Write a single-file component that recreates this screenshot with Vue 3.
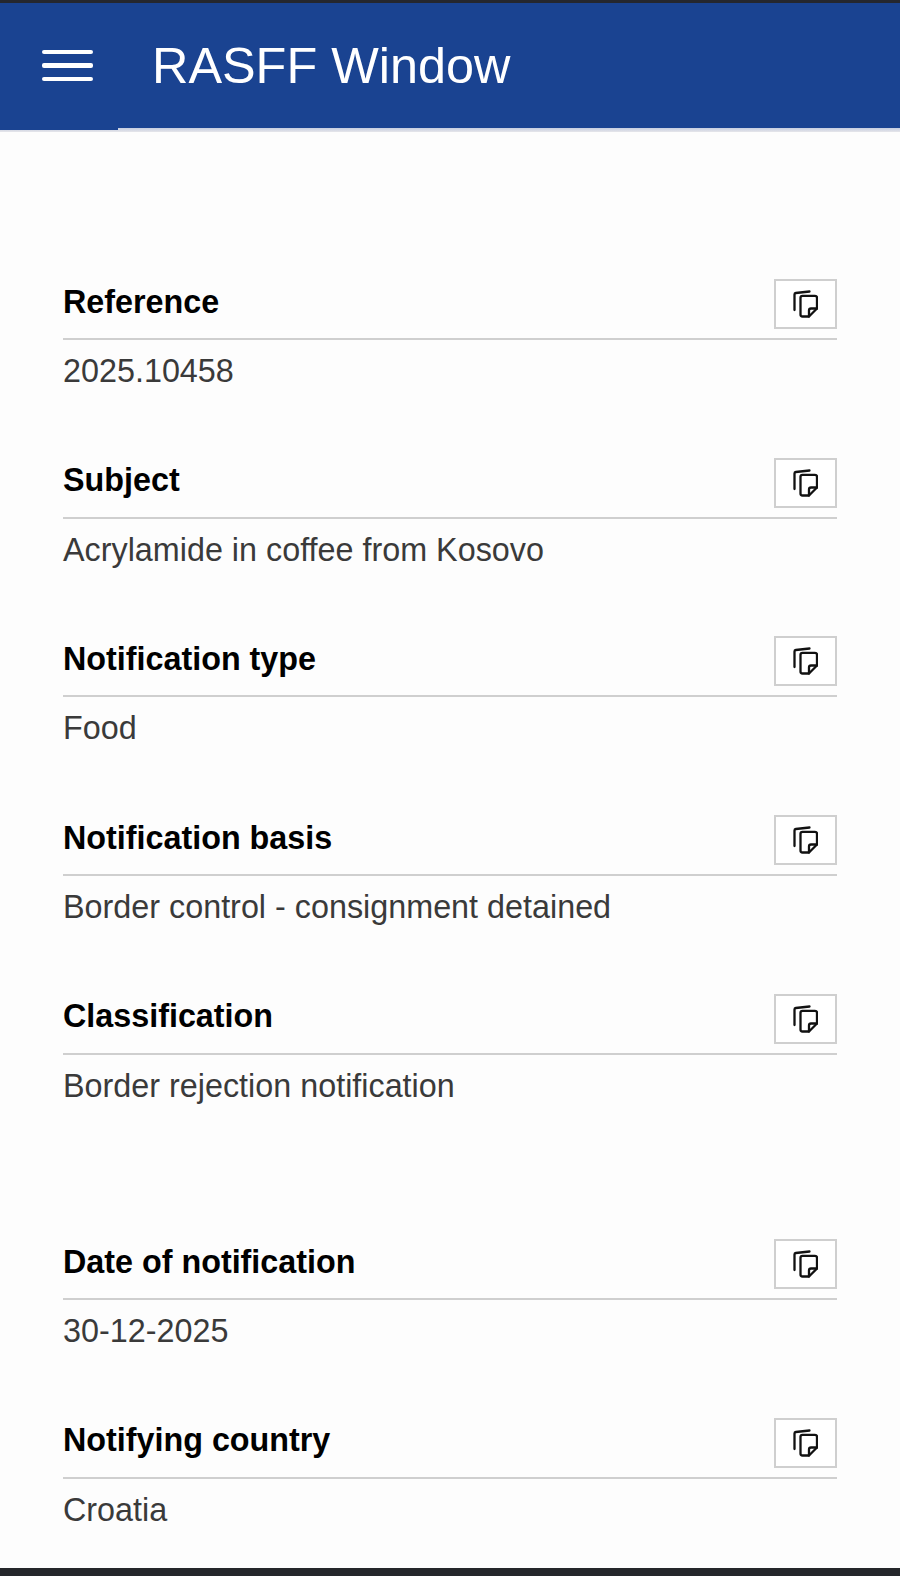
<script setup>
const groups = [
  [
    { label: 'Reference', value: '2025.10458' },
    { label: 'Subject', value: 'Acrylamide in coffee from Kosovo' },
    { label: 'Notification type', value: 'Food' },
    { label: 'Notification basis', value: 'Border control - consignment detained' },
    { label: 'Classification', value: 'Border rejection notification' },
  ],
  [
    { label: 'Date of notification', value: '30-12-2025' },
    { label: 'Notifying country', value: 'Croatia' },
  ],
];
</script>

<template>
  <div class="screen">
    <div class="status-edge"></div>
    <header class="app-bar">
      <button class="menu-btn" aria-label="Menu">
        <span></span><span></span><span></span>
      </button>
      <h1>RASFF Window</h1>
    </header>
    <div class="bar-shadow">
      <div class="tab-mark"></div>
    </div>

    <main class="details">
      <section v-for="(group, g) in groups" :key="g" class="group">
        <div v-for="item in group" :key="item.label" class="field">
          <div class="field-head">
            <strong>{{ item.label }}</strong>
            <button class="copy-btn" aria-label="Copy">
              <svg width="25" height="28" viewBox="0 0 25 28" fill="none" stroke="#111" stroke-width="2.3" stroke-linecap="round" stroke-linejoin="round">
                <path d="M1.5 20V4.5Q1.5 3.2 2.8 3L16.5 1.5" />
                <path d="M16 26.5H9.5Q7.5 26.5 7.5 24.5V7.8Q7.5 5.8 9.5 5.8H22Q24 5.8 24 7.8V18.5Z" />
                <path d="M16 26.5V20.5Q16 18.5 18 18.5H24" />
              </svg>
            </button>
          </div>
          <p>{{ item.value }}</p>
        </div>
      </section>
    </main>

    <div class="bottom-edge"></div>
  </div>
</template>

<style>
html,
body {
  margin: 0;
  background: #fdfdfd;
}
</style>

<style scoped>
.screen {
  width: 900px;
  height: 1576px;
  display: flex;
  flex-direction: column;
  overflow: hidden;
  background: #fdfdfd;
  font-family: "Liberation Sans", Arial, sans-serif;
}

.status-edge {
  height: 3px;
  background: #25272e;
}

.app-bar {
  height: 125px;
  display: flex;
  align-items: center;
  background: #1a4391;
  color: #fff;
}

.menu-btn {
  width: 51px;
  margin: 0 0 0 42px;
  padding: 0;
  display: flex;
  flex-direction: column;
  gap: 9px;
  background: none;
  border: none;
}

.menu-btn span {
  height: 4.5px;
  border-radius: 2px;
  background: #fff;
}

h1 {
  margin: 2px 0 0 59px;
  font-size: 50.4px;
  font-weight: 400;
  line-height: 1;
}

.bar-shadow {
  height: 4px;
  background: linear-gradient(#c5cde0, #e6e6ea);
}

.tab-mark {
  width: 118px;
  height: 2px;
  background: #1a4391;
}

.details {
  flex: 1;
  padding: 147px 63px 0;
  display: flex;
  flex-direction: column;
  gap: 66.6px;
}

.field {
  height: 178.7px;
}

.group:last-child .field:last-child {
  height: 112px;
}

.group:first-child .field:last-child {
  height: 178.7px;
}

.field-head {
  height: 59px;
  display: flex;
  justify-content: space-between;
  align-items: flex-start;
  border-bottom: 2px solid #cfcfcf;
  box-sizing: content-box;
}

strong {
  margin-top: 4.5px;
  font-size: 32.3px;
  line-height: 36px;
  font-weight: 700;
  color: #000;
}

.copy-btn {
  width: 63px;
  height: 50px;
  padding: 0;
  display: flex;
  align-items: center;
  justify-content: center;
  background: #fff;
  border: 2px solid #cfcfcf;
  box-sizing: border-box;
}

p {
  margin: 12px 0 0;
  font-size: 32.35px;
  line-height: 38px;
  color: #3a3a3a;
}

.bottom-edge {
  height: 8px;
  background: #25272b;
}
</style>
